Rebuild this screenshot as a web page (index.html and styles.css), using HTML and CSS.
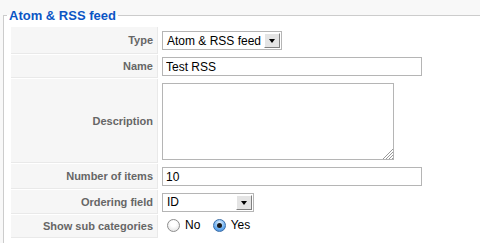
FILE: index.html
```html
<!DOCTYPE html>
<html lang="en">

<head>
    <meta charset="UTF-8" />
    <title>Atom &amp; RSS feed</title>
    <link rel="stylesheet" href="styles.css">
</head>

<body>
    <fieldset class="adminform">
        <legend>Atom &amp; RSS feed</legend>
        <table class="admintable">
            <tr class="row-type">
                <td class="key">Type</td>
                <td class="value">
                    <div class="select type-select">
                        <span class="select-text">Atom &amp; RSS feed</span>
                        <span class="arrow"></span>
                    </div>
                </td>
            </tr>
            <tr class="row-name">
                <td class="key">Name</td>
                <td class="value"><input type="text" class="text-input" value="Test RSS" /></td>
            </tr>
            <tr class="row-desc">
                <td class="key">Description</td>
                <td class="value">
                    <div class="textarea">
                        <svg class="grip" width="11" height="11" viewBox="0 0 11 11">
                            <path d="M11 1 L1 11 M11 4 L4 11 M11 7 L7 11 M11 10 L10 11" stroke="#9a9a9a" stroke-width="1" />
                        </svg>
                    </div>
                </td>
            </tr>
            <tr class="row-num">
                <td class="key">Number of items</td>
                <td class="value"><input type="text" class="text-input" value="10" /></td>
            </tr>
            <tr class="row-order">
                <td class="key">Ordering field</td>
                <td class="value">
                    <div class="select order-select">
                        <span class="select-text">ID</span>
                        <span class="arrow"></span>
                    </div>
                </td>
            </tr>
            <tr class="row-sub">
                <td class="key">Show sub categories</td>
                <td class="value">
                    <label class="radio"><span class="radio-dot"></span>No</label>
                    <label class="radio"><span class="radio-dot checked"></span>Yes</label>
                </td>
            </tr>
        </table>
    </fieldset>
</body>

</html>
```

FILE: styles.css
```css
html {
    overflow: hidden;
}

body {
    margin: 0;
    background: #f8f8f8;
    font-family: 'Liberation Sans', Arial, sans-serif;
    font-size: 12px;
    height: 243px;
    overflow: hidden;
}

.adminform {
    box-sizing: border-box;
    margin: 8px 0 0 3px;
    padding: 0 0 0 3px;
    border: 1px solid #cccccc;
    border-right: none;
    border-bottom: none;
    background: #fff;
    height: 235px;
}

.adminform legend {
    color: #0b55c4;
    font-size: 13px;
    font-weight: bold;
    line-height: 15px;
    padding: 0 2px;
}

.admintable {
    margin: 3px 0 0 3px;
    border-spacing: 1px;
    width: 466px;
}

.admintable td {
    box-sizing: border-box;
    padding: 0;
}

.admintable td.key {
    width: 147px;
    background: #f6f6f6;
    border-bottom: 1px solid #e9e9e9;
    border-right: 1px solid #e9e9e9;
    color: #666;
    font-size: 11px;
    font-weight: bold;
    text-align: right;
    padding-right: 4px;
}

.admintable td.value {
    padding-left: 3px;
}

.row-type td { height: 27px; }
.row-name td { height: 23px; }
.row-desc td { height: 84px; }
.row-num td { height: 25px; }
.row-order td { height: 24px; }
.row-sub td { height: 23px; }

.text-input {
    display: block;
    box-sizing: border-box;
    width: 260px;
    height: 19px;
    margin: 0;
    border: 1px solid #b5b5b5;
    padding: 0 3px;
    font-family: 'Liberation Sans', Arial, sans-serif;
    font-size: 12px;
    color: #000;
    outline: none;
}

.select {
    display: flex;
    align-items: center;
    box-sizing: border-box;
    height: 19px;
    border: 1px solid #b5b5b5;
    background: #fff;
    padding-left: 4px;
}

.type-select { width: 120px; }
.order-select { width: 92px; }

.select-text {
    flex: 1;
    color: #000;
    font-size: 12px;
    white-space: nowrap;
}

.arrow {
    position: relative;
    width: 16px;
    height: 15px;
    margin-right: 1px;
    box-sizing: border-box;
    background: #e4e4e4;
    border: 1px solid;
    border-color: #fff #808080 #808080 #fff;
}

.arrow::after {
    content: "";
    position: absolute;
    left: 4px;
    top: 5px;
    border-left: 3.5px solid transparent;
    border-right: 3.5px solid transparent;
    border-top: 4px solid #000;
}

.textarea {
    position: relative;
    box-sizing: border-box;
    width: 232px;
    height: 77px;
    border: 1px solid #b5b5b5;
    background: #fff;
}

.grip {
    position: absolute;
    right: 0;
    bottom: 0;
}

.radio {
    display: inline-flex;
    align-items: center;
    font-size: 12px;
    color: #000;
    margin-left: 5px;
    margin-right: 4px;
}

.radio-dot {
    box-sizing: border-box;
    width: 13px;
    height: 13px;
    border-radius: 50%;
    border: 1px solid #8d8d8d;
    background: radial-gradient(circle at 50% 35%, #fff 30%, #dcdcdc 100%);
    margin-right: 5px;
    position: relative;
}

.radio-dot.checked {
    border-color: #3b6ea8;
    background: radial-gradient(circle at 50% 30%, #d3e8fb 10%, #6aaef0 60%, #3a7fd0 100%);
}

.radio-dot.checked::after {
    content: "";
    position: absolute;
    left: 3px;
    top: 3px;
    width: 5px;
    height: 5px;
    border-radius: 50%;
    background: #1a1a1a;
}
```
